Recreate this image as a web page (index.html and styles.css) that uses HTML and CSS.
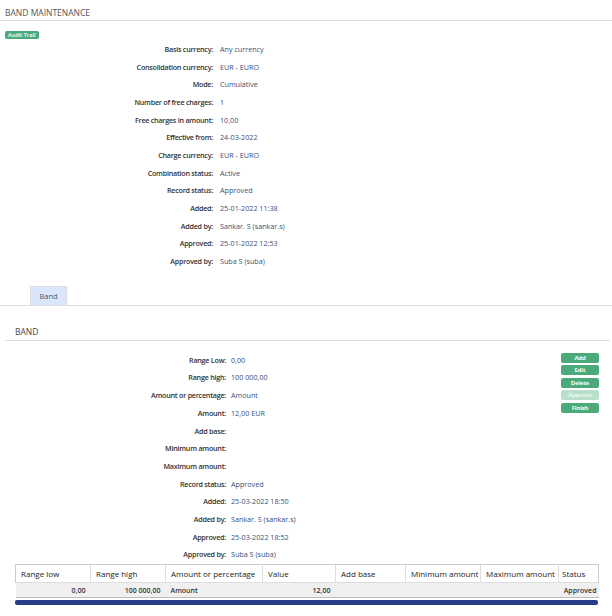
FILE: index.html
```html
<!DOCTYPE html>
<html>
<head>
<meta charset="utf-8">
<link rel="stylesheet" href="styles.css">
</head>
<body>
<div class="page">
  <div class="section-title top">BAND MAINTENANCE</div>
  <div class="badge-row"><span class="badge">Audit Trail</span></div>
  <div class="details main">
    <div class="lbl">Basis currency:</div><div class="val">Any currency</div>
    <div class="lbl">Consolidation currency:</div><div class="val">EUR - EURO</div>
    <div class="lbl">Mode:</div><div class="val">Cumulative</div>
    <div class="lbl">Number of free charges:</div><div class="val">1</div>
    <div class="lbl">Free charges in amount:</div><div class="val">10,00</div>
    <div class="lbl">Effective from:</div><div class="val">24-03-2022</div>
    <div class="lbl">Charge currency:</div><div class="val">EUR - EURO</div>
    <div class="lbl">Combination status:</div><div class="val">Active</div>
    <div class="lbl">Record status:</div><div class="val">Approved</div>
    <div class="lbl">Added:</div><div class="val">25-01-2022 11:38</div>
    <div class="lbl">Added by:</div><div class="val">Sankar. S (sankar.s)</div>
    <div class="lbl">Approved:</div><div class="val">25-01-2022 12:53</div>
    <div class="lbl">Approved by:</div><div class="val">Suba S (suba)</div>
  </div>
  <div class="tabs"><div class="tab">Band</div></div>
  <div class="band-title">BAND</div>
  <div class="band-body">
    <div class="details band">
      <div class="lbl">Range Low:</div><div class="val">0,00</div>
      <div class="lbl">Range high:</div><div class="val">100 000,00</div>
      <div class="lbl">Amount or percentage:</div><div class="val">Amount</div>
      <div class="lbl">Amount:</div><div class="val">12,00 EUR</div>
      <div class="lbl">Add base:</div><div class="val"></div>
      <div class="lbl">Minimum amount:</div><div class="val"></div>
      <div class="lbl">Maximum amount:</div><div class="val"></div>
      <div class="lbl">Record status:</div><div class="val">Approved</div>
      <div class="lbl">Added:</div><div class="val">25-03-2022 18:50</div>
      <div class="lbl">Added by:</div><div class="val">Sankar. S (sankar.s)</div>
      <div class="lbl">Approved:</div><div class="val">25-03-2022 18:52</div>
      <div class="lbl">Approved by:</div><div class="val">Suba S (suba)</div>
    </div>
    <div class="buttons">
      <span class="btn">Add</span>
      <span class="btn">Edit</span>
      <span class="btn">Delete</span>
      <span class="btn disabled">Approve</span>
      <span class="btn">Finish</span>
    </div>
  </div>
  <table class="grid">
    <colgroup>
      <col class="c1"><col class="c2"><col class="c3"><col class="c4"><col class="c5"><col class="c6"><col class="c7"><col class="c8">
    </colgroup>
    <thead>
      <tr><th>Range low</th><th>Range high</th><th>Amount or percentage</th><th>Value</th><th>Add base</th><th>Minimum amount</th><th>Maximum amount</th><th>Status</th></tr>
    </thead>
    <tbody>
      <tr><td class="r">0,00</td><td class="r">100 000,00</td><td>Amount</td><td class="r">12,00</td><td></td><td></td><td></td><td class="r">Approved</td></tr>
    </tbody>
  </table>
  <div class="scrollbar"></div>
</div>
</body>
</html>
```
FILE: styles.css
```css
* { box-sizing: border-box; }
body {
  margin: 0;
  background: #fff;
  font-family: "Open Sans", "Noto Sans", sans-serif;
  color: #333;
}
.page { width: 612px; }
.section-title.top {
  font-size: 8.5px;
  color: #555;
  padding: 8px 0 2px 5px;
  line-height: 10px;
  border-bottom: 1px solid #ddd;
}
.badge-row {
  display: flex;
  align-items: flex-start;
  padding: 10px 0 0 5px;
  height: 19px;
}
.badge {
  display: block;
  background: #4caa7a;
  color: #e9f7ef;
  font-size: 5.3px;
  font-weight: 700;
  line-height: 8px;
  height: 8px;
  padding: 0 3px;
  border-radius: 2px;
}
.details {
  display: grid;
  grid-auto-rows: 17.7px;
  align-items: center;
  font-size: 7.2px;
}
.details.main { grid-template-columns: 213px 1fr; column-gap: 7px; }
.details.band { grid-template-columns: 226px 1fr; column-gap: 5px; }
.lbl { text-align: right; font-weight: 600; color: #333; white-space: nowrap; letter-spacing: -0.25px; }
.val { color: #3a5078; white-space: nowrap; }
.tabs {
  margin-top: 16px;
  padding-left: 30px;
  border-bottom: 1px solid #ddd;
  display: flex;
}
.tab {
  width: 37px;
  height: 19px;
  background: #dae6fb;
  border: 1px solid #dcdcdc;
  border-bottom: none;
  font-size: 7.5px;
  color: #555;
  display: flex;
  align-items: center;
  justify-content: center;
}
.band-title {
  margin: 21px 2px 0 5px;
  padding: 0 0 3px 10px;
  font-size: 8.5px;
  color: #444;
  line-height: 10px;
  border-bottom: 1px solid #ddd;
}
.band-body {
  display: flex;
  justify-content: space-between;
  padding-top: 10px;
}
.band-body .details { flex: 1; }
.buttons {
  display: flex;
  flex-direction: column;
  gap: 2.5px;
  padding-top: 2px;
  margin-right: 13px;
}
.btn {
  width: 38px;
  height: 10px;
  background: #4caa7a;
  color: #f3fbf6;
  font-size: 6px;
  font-weight: 700;
  text-align: center;
  line-height: 10px;
  border-radius: 2px;
  letter-spacing: -0.2px;
}
.btn.disabled { background: #b8dfca; color: #eaf6ef; }
.grid {
  margin: 1px 0 0 15px;
  width: 583px;
  border-collapse: collapse;
  table-layout: fixed;
  font-size: 8px;
}
.c1 { width: 75px; } .c2 { width: 75px; } .c3 { width: 97px; } .c4 { width: 73px; }
.c5 { width: 70px; } .c6 { width: 75px; } .c7 { width: 78px; } .c8 { width: 40px; }
.grid th {
  font-weight: 400;
  text-align: left;
  color: #222;
  height: 18px;
  padding: 0 5px;
  border-top: 1px solid #ccc;
  border-left: 1px solid #ddd;
  white-space: nowrap;
}
.grid th:first-child { border-left: 1px solid #ccc; }
.grid th:last-child { border-right: 1px solid #ccc; padding: 0 3px; }
.grid td {
  background: #f0f0f0;
  height: 15px;
  padding: 0 5px;
  font-size: 7px;
  font-weight: 600;
  color: #333;
  border-top: 1px solid #ddd;
  border-bottom: 1px solid #bbb;
  white-space: nowrap;
}
.grid td:last-child { padding: 0 2px; }
.grid td.r { text-align: right; }
.scrollbar {
  margin: 2px 14px 0 15px;
  height: 5px;
  background: #283c8a;
  border-radius: 2px;
}
```
